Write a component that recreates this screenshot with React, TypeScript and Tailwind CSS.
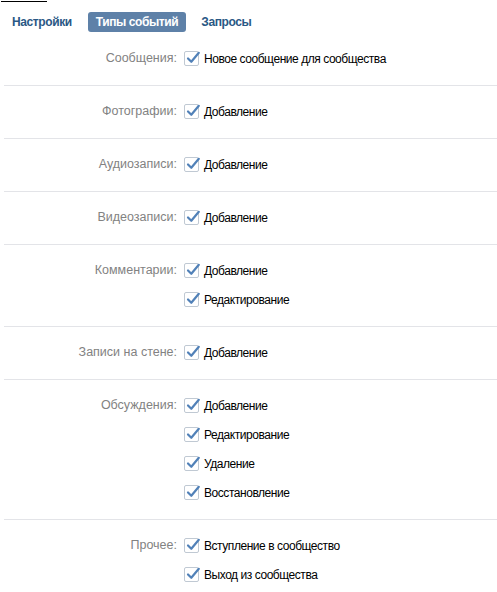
import React from 'react';

const sections: { label: string; items: string[] }[] = [
  { label: 'Сообщения:', items: ['Новое сообщение для сообщества'] },
  { label: 'Фотографии:', items: ['Добавление'] },
  { label: 'Аудиозаписи:', items: ['Добавление'] },
  { label: 'Видеозаписи:', items: ['Добавление'] },
  { label: 'Комментарии:', items: ['Добавление', 'Редактирование'] },
  { label: 'Записи на стене:', items: ['Добавление'] },
  { label: 'Обсуждения:', items: ['Добавление', 'Редактирование', 'Удаление', 'Восстановление'] },
  { label: 'Прочее:', items: ['Вступление в сообщество', 'Выход из сообщества'] },
];

function Check() {
  return (
    <span className="relative h-[15px] w-[15px] shrink-0 rounded-[2px] border border-[#c0c9d3] bg-white">
      <svg width="15" height="14" viewBox="0 0 15 14" className="absolute left-[1px] top-[-1px]">
        <path d="M2 7.5 L5.3 10.8 L12.8 1.8" fill="none" stroke="#5181b8" strokeWidth="2.2" strokeLinecap="round" strokeLinejoin="round" />
      </svg>
    </span>
  );
}

export default function App() {
  return (
    <div className="relative min-h-[592px] w-[497px] bg-white text-[12.5px]" style={{ fontFamily: '"Liberation Sans", Arial, sans-serif' }}>
      <div className="absolute left-[1px] top-[1px] h-[1px] w-[46px] bg-black" />
      <div className="flex h-[33px] items-center pl-[12px] pt-[11px] text-[12px] font-bold tracking-[-0.4px] text-[#2a5885]">
        <span className="py-[3px]">Настройки</span>
        <span className="ml-[16px] flex h-[20px] items-center rounded-[3px] bg-[#5e81a8] px-[8px] text-white">Типы событий</span>
        <span className="ml-[15px] py-[3px]">Запросы</span>
      </div>
      <div className="ml-[4px]">
        {sections.map((s, i) => (
          <div key={i} className={`flex pt-[11px] pb-[12px] ${i < sections.length - 1 ? 'border-b border-[#e3e4e8]' : ''}`}>
            <div className="w-[173px] shrink-0 text-right leading-[29px] text-[#828282]">{s.label}</div>
            <div className="flex flex-col pl-[7px]">
              {s.items.map((it, j) => (
                <div key={j} className="flex h-[29px] items-center gap-[5px] text-[12px] tracking-[-0.45px] text-black">
                  <Check />
                  <span>{it}</span>
                </div>
              ))}
            </div>
          </div>
        ))}
      </div>
    </div>
  );
}
